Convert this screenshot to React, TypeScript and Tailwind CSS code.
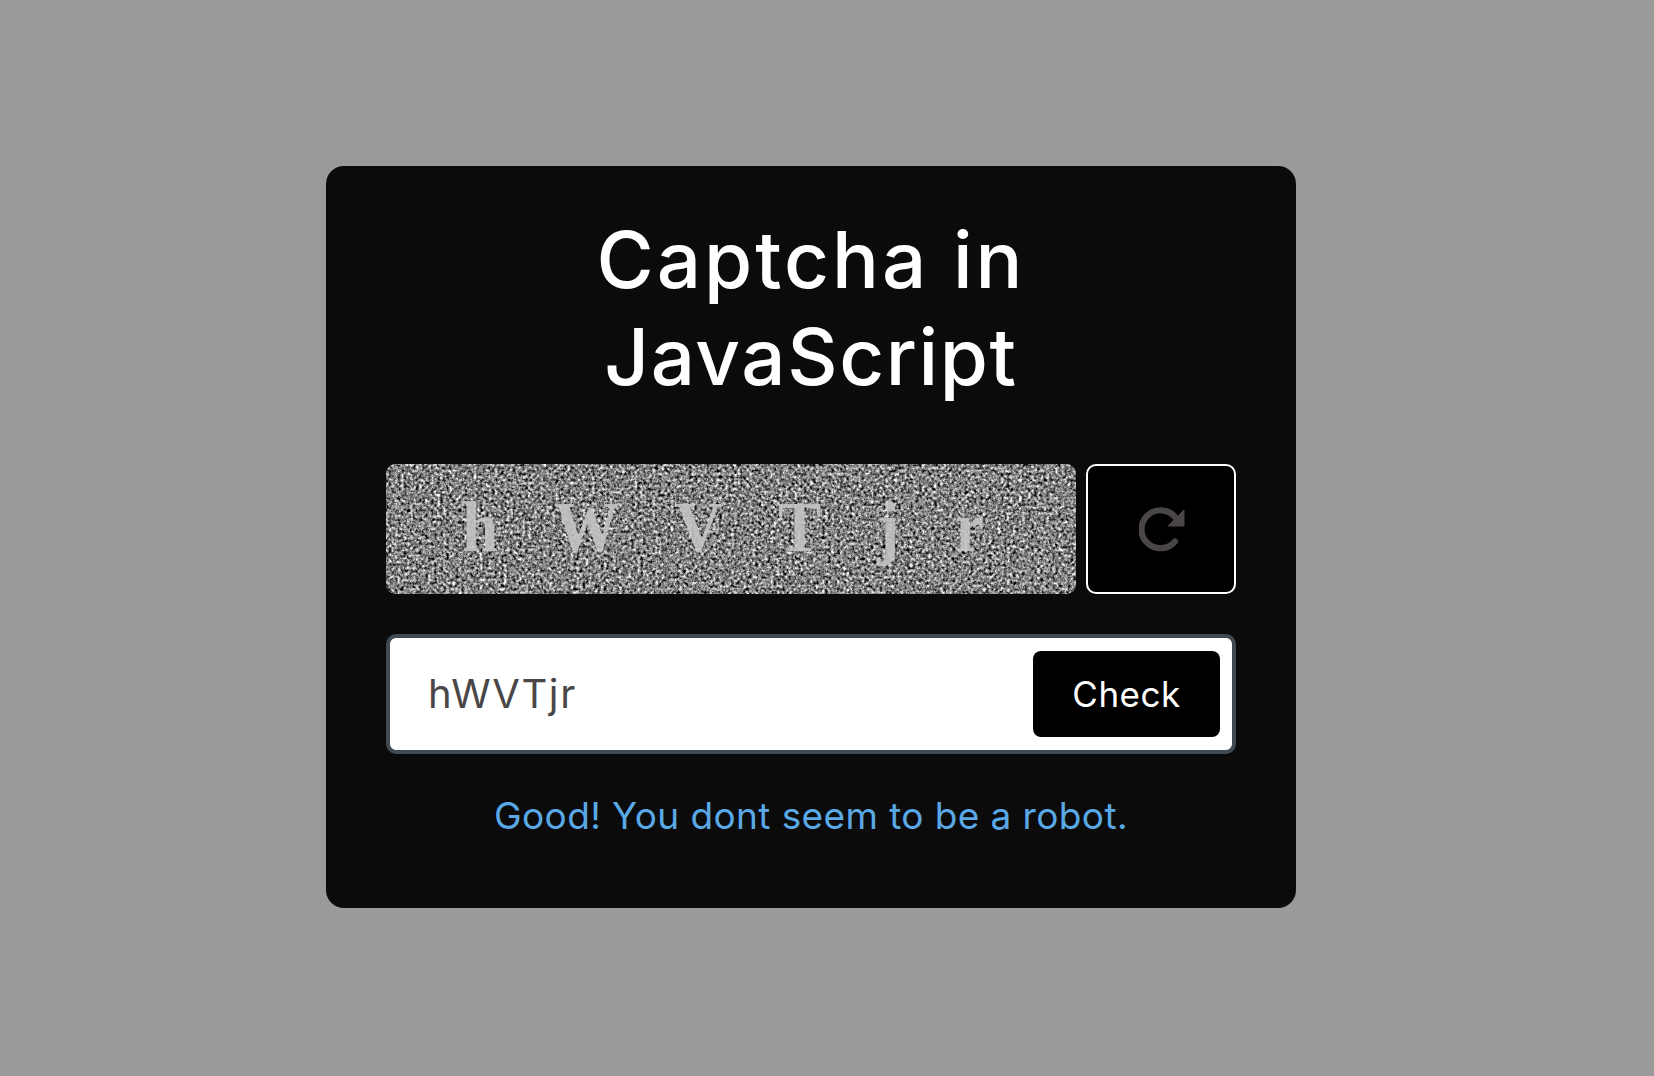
import React from "react";

export default function App() {
  return (
    <div className="min-h-screen bg-[#9a9a9a] flex items-center justify-center pr-8 pb-[2px] font-['Inter','Open_Sans',sans-serif]">
      <div className="w-[970px] h-[742px] bg-[#0b0b0b] rounded-[18px] px-[60px] pt-[45px]">
        <h1 className="text-white text-center text-[78px] leading-[97px] font-medium">
          <span className="tracking-[3px]">Captcha in</span>
          <br />
          <span className="tracking-[1.6px]">JavaScript</span>
        </h1>
        <div className="flex gap-[10px] mt-[59px] h-[130px]">
          <div className="relative w-[690px] rounded-[10px] overflow-hidden bg-[#808080]">
            <svg className="block w-full h-full" width="690" height="130">
              <filter id="noise" x="0" y="0" width="100%" height="100%" colorInterpolationFilters="sRGB">
                <feTurbulence type="fractalNoise" baseFrequency="0.33" numOctaves="3" seed="7" />
                <feColorMatrix type="matrix" values="1.15 1.15 0 0 -0.65  1.15 1.15 0 0 -0.65  1.15 1.15 0 0 -0.65  0 0 0 0 1" />
                <feGaussianBlur stdDeviation="0.45" />
              </filter>
              <rect width="690" height="130" filter="url(#noise)" />
            </svg>
            <div className="absolute left-[76px] top-[26px] whitespace-nowrap font-['Liberation_Serif',serif] font-bold text-[65px] leading-[75px] tracking-[56px] text-[#c4c4c4] opacity-90 scale-y-[1.09]">
              hWVTjr
            </div>
          </div>
          <button className="w-[150px] rounded-[10px] bg-black border-2 border-white flex items-center justify-center">
            <svg className="ml-[2px]" width="46" height="45" viewBox="0 0 46 45" fill="none">
              <path d="M36 34.5A19 19 0 1 1 36 10" stroke="#4a4646" strokeWidth="6.2" strokeLinecap="round" />
              <path d="M45 3V19H29Z" fill="#4a4646" stroke="#4a4646" strokeWidth="1" strokeLinejoin="round" />
            </svg>
          </button>
        </div>
        <div className="flex items-center justify-between mt-[40px] h-[120px] w-[850px] bg-white border-4 border-[#3f4a52] rounded-[10px] pl-[38px] pr-[12px]">
          <span className="text-[40px] tracking-[1.6px] text-[#4a4646]">hWVTjr</span>
          <button className="w-[187px] h-[86px] rounded-[8px] bg-black text-white text-[35px] tracking-[0.5px]">Check</button>
        </div>
        <p className="text-center text-[#5aa9e6] text-[37px] tracking-[0.4px] leading-[44px] mt-[40px]">Good! You dont seem to be a robot.</p>
      </div>
    </div>
  );
}
